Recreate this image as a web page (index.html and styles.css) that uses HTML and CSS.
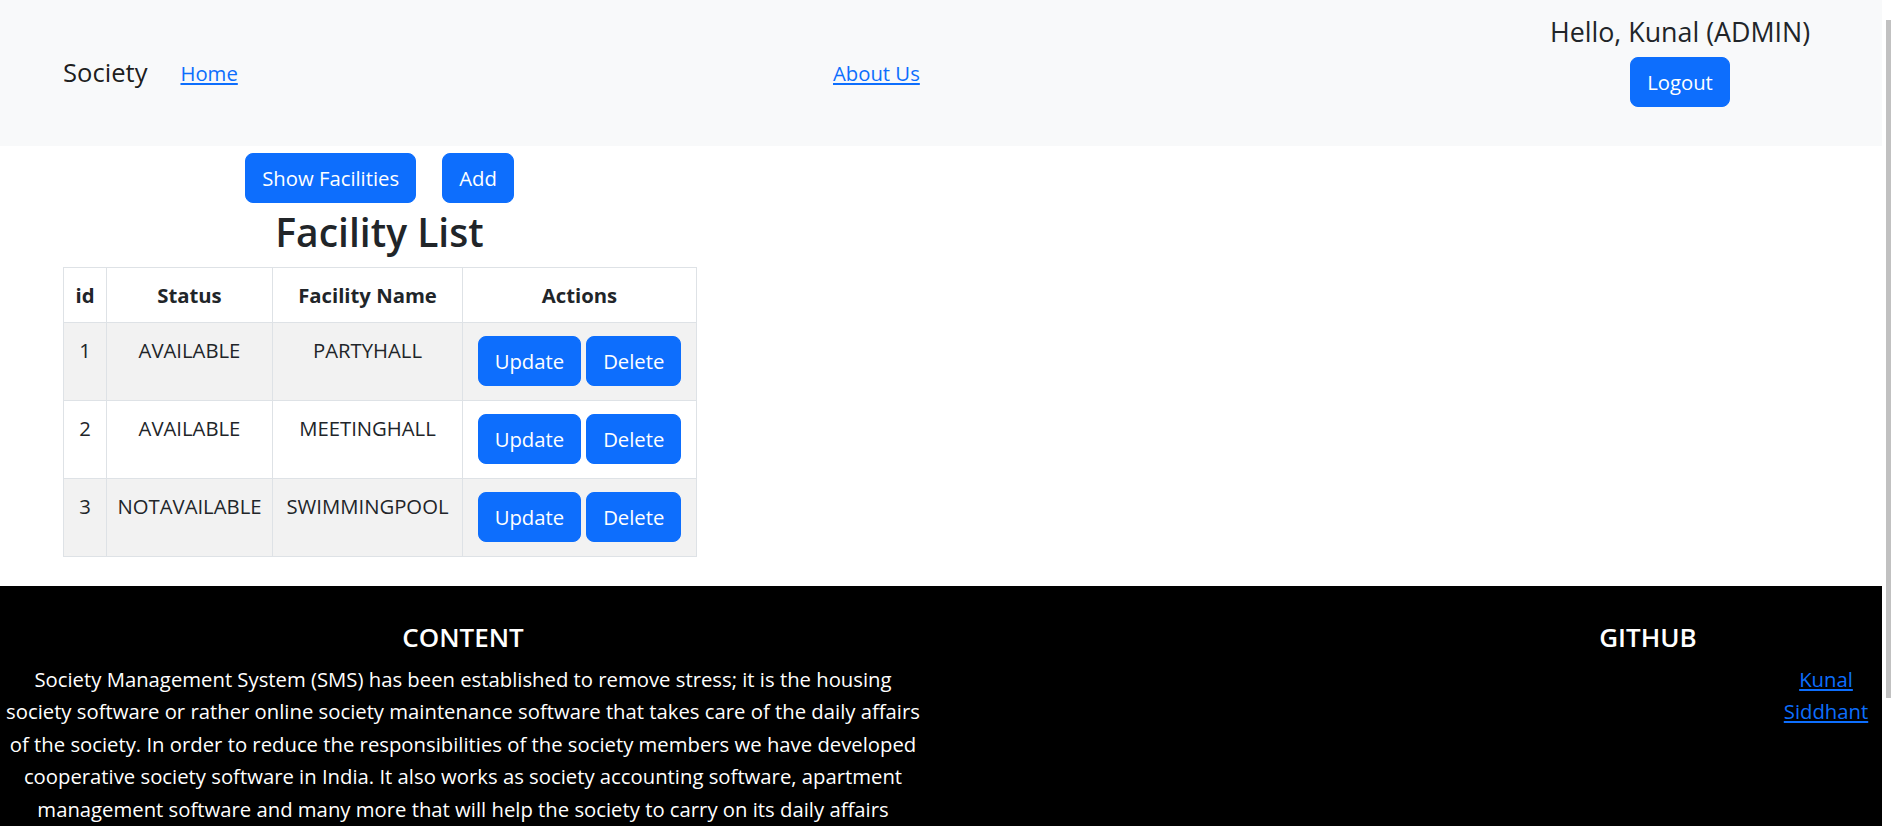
FILE: index.html
```html
<!DOCTYPE html>
<html lang="en">
<head>
<meta charset="utf-8">
<title>Society - Facility List</title>
<link rel="stylesheet" href="styles.css">
</head>
<body>
<nav class="navbar">
  <div class="nav-left">
    <a class="brand" href="#">Society</a>
    <a class="nav-link" href="#">Home</a>
  </div>
  <div class="nav-mid">
    <a class="nav-link" href="#">About Us</a>
  </div>
  <div class="user">
    <h4 class="hello">Hello, Kunal (ADMIN)</h4>
    <button class="btn">Logout</button>
  </div>
</nav>

<main class="main">
  <section class="facility">
    <div class="toolbar">
      <button class="btn">Show Facilities</button>
      <button class="btn">Add</button>
    </div>
    <h2 class="title">Facility List</h2>
    <table class="table">
      <colgroup>
        <col class="c-id"><col class="c-status"><col class="c-name"><col class="c-actions">
      </colgroup>
      <thead>
        <tr><th>id</th><th>Status</th><th>Facility Name</th><th>Actions</th></tr>
      </thead>
      <tbody>
        <tr><td>1</td><td>AVAILABLE</td><td>PARTYHALL</td><td><div class="row-actions"><button class="btn">Update</button><button class="btn">Delete</button></div></td></tr>
        <tr><td>2</td><td>AVAILABLE</td><td>MEETINGHALL</td><td><div class="row-actions"><button class="btn">Update</button><button class="btn">Delete</button></div></td></tr>
        <tr><td>3</td><td>NOTAVAILABLE</td><td>SWIMMINGPOOL</td><td><div class="row-actions"><button class="btn">Update</button><button class="btn">Delete</button></div></td></tr>
      </tbody>
    </table>
  </section>
</main>

<footer class="footer">
  <div class="f-col">
    <h5 class="f-title">CONTENT</h5>
    <p class="f-text">Society Management System (SMS) has been established to remove stress; it is the housing<br>society software or rather online society maintenance software that takes care of the daily affairs<br>of the society. In order to reduce the responsibilities of the society members we have developed<br>cooperative society software in India. It also works as society accounting software, apartment<br>management software and many more that will help the society to carry on its daily affairs</p>
  </div>
  <div class="f-spacer"></div>
  <div class="f-col f-github">
    <h5 class="f-title">GITHUB</h5>
    <div class="f-links">
      <a href="#">Kunal</a>
      <a href="#">Siddhant</a>
    </div>
  </div>
</footer>

<div class="scrollbar"><div class="thumb"></div></div>
</body>
</html>
```

FILE: styles.css
```css
* { box-sizing: border-box; }
html { overflow: hidden; }
body {
  margin: 0;
  font-family: "Open Sans", "Noto Sans", sans-serif;
  font-size: 20.3px;
  line-height: 32.4px;
  color: #212529;
  background: #fff;
}

/* navbar */
.navbar {
  display: grid;
  grid-template-columns: 770px 1fr 300px;
  align-items: center;
  height: 146px;
  padding: 0 61px 0 63px;
  background: #f8f9fa;
}
.nav-left { display: flex; align-items: center; gap: 33px; }
.brand { font-size: 25.6px; color: rgba(0,0,0,.9); text-decoration: none; }
.nav-link { color: #0d6efd; text-decoration: underline; }
.user { align-self: start; padding-top: 14px; text-align: center; }
.hello { margin: 0 0 8px; font-size: 26.8px; font-weight: 400; line-height: 35px; }

.btn {
  display: inline-flex;
  align-items: center;
  justify-content: center;
  height: 50px;
  padding: 0 16px;
  border: 1px solid #0d6efd;
  border-radius: 8px;
  background: #0d6efd;
  color: #fff;
  font-family: inherit;
  font-size: 20.3px;
  line-height: 32px;
}

/* main */
.main { padding: 7px 0 29px 63px; }
.facility { width: 633px; text-align: center; }
.toolbar { display: flex; justify-content: center; gap: 26px; }
.title { margin: 4px 0 10px; font-size: 39px; font-weight: 600; line-height: 50px; }

.table { width: 633px; border-collapse: collapse; table-layout: fixed; }
.c-id { width: 43px; }
.c-status { width: 166px; }
.c-name { width: 190px; }
.c-actions { width: 234px; }
.table th, .table td {
  border: 1px solid #dee2e6;
  padding: 11px 10px;
  vertical-align: top;
  text-align: center;
  line-height: 32px;
}
.table th { font-weight: 700; }
.table thead tr { height: 55px; }
.table tbody tr { height: 78px; }
.table tbody tr:nth-child(odd) td { background: #f2f2f2; }
.row-actions { display: flex; justify-content: center; gap: 5px; margin: 2px 0; }

/* footer */
.footer {
  display: grid;
  grid-template-columns: 926px 1fr 468px;
  padding: 35px 9px 60px 0;
  background: #000;
  color: #fff;
}
.f-title { margin: 0 0 10px; font-size: 26px; font-weight: 600; line-height: 32px; text-align: center; }
.f-text { margin: 0; text-align: center; white-space: nowrap; }
.f-github { display: flex; flex-direction: column; }
.f-links { display: flex; flex-direction: column; align-items: center; width: 100px; margin: 0 6px 0 auto; }
.f-links a { color: #0d6efd; text-decoration: underline; line-height: 32.4px; }

/* scrollbar */
.scrollbar { position: fixed; top: 0; right: 0; width: 9px; height: 100%; background: #fff; }
.thumb { position: absolute; top: 20px; right: 0; width: 5px; height: 678px; background: #c1c1c1; }
```
